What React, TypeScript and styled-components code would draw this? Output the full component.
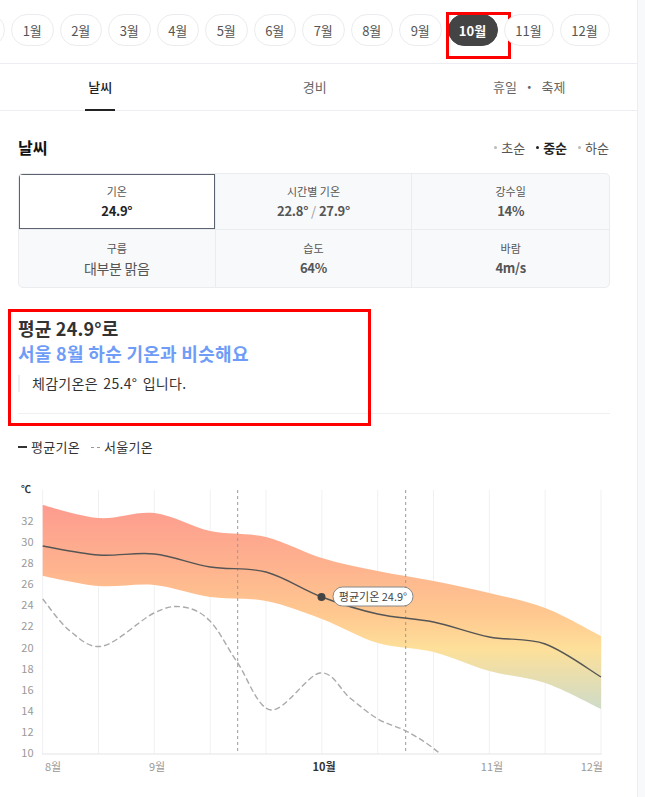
import * as React from 'react';
import styled, { createGlobalStyle } from 'styled-components';

const GlobalStyle = createGlobalStyle`
    html, body {
        margin: 0;
        padding: 0;
        background: #f8f9fa;
    }
    body {
        font-family: "Noto Sans CJK KR", "Noto Sans", sans-serif;
        color: #333;
    }
    * { box-sizing: border-box; }
`

const Page = styled.div`
    width: 638px;
    min-height: 797px;
    background: #fff;
    border-right: 1px solid #eceef1;
    overflow: hidden;
`

const MonthBar = styled.div`
    height: 64px;
    padding-top: 14px;
    border-bottom: 1px solid #eceef1;
    overflow: hidden;
`

const MonthTrack = styled.div`
    display: flex;
    gap: 6px;
    margin-left: -39px;
`

const Pill = styled.div<{ $active?: boolean, $wide?: boolean }>`
    position: relative;
    flex: 0 0 auto;
    min-width: ${p => p.$wide ? 50 : 42.5}px;
    height: 32px;
    padding: 0 10px;
    border-radius: 16px;
    border: 1px solid ${p => p.$active ? '#444' : '#eaecef'};
    background: ${p => p.$active ? '#444' : '#fff'};
    color: ${p => p.$active ? '#fff' : '#555'};
    font-weight: ${p => p.$active ? 700 : 400};
    font-size: 13px;
    display: flex;
    align-items: center;
    justify-content: center;
    white-space: nowrap;
`

const Mark = styled.span<{ $l: number, $t: number, $w: number, $h: number }>`
    position: absolute;
    left: ${p => p.$l}px;
    top: ${p => p.$t}px;
    width: ${p => p.$w}px;
    height: ${p => p.$h}px;
    border: 3px solid #ff0000;
    pointer-events: none;
`

const TabBar = styled.div`
    display: grid;
    grid-template-columns: repeat(3, 214.5px);
    margin-left: -7px;
    height: 47px;
    border-bottom: 1px solid #eceef1;
`

const Tab = styled.div<{ $active?: boolean }>`
    display: flex;
    justify-content: center;
    align-items: stretch;
    font-size: 13px;
    color: ${p => p.$active ? '#222' : '#666'};
    font-weight: ${p => p.$active ? 500 : 400};

    span {
        display: flex;
        align-items: center;
        padding: 0 3px;
        border-bottom: 2px solid ${p => p.$active ? '#222' : 'transparent'};
        margin-bottom: -1px;
    }
`

const Content = styled.div`
    padding: 0 27px 0 18px;
`

const SectionHead = styled.div`
    display: flex;
    justify-content: space-between;
    align-items: center;
    margin-top: 25px;
    height: 22px;
    margin-bottom: 15px;

    h2 {
        margin: 0;
        font-size: 16px;
        font-weight: 700;
        color: #111;
    }
`

const Periods = styled.div`
    display: flex;
    gap: 11px;
    margin-right: 1px;
`

const Period = styled.div<{ $active?: boolean }>`
    display: flex;
    align-items: center;
    gap: 4px;
    font-size: 13px;
    color: ${p => p.$active ? '#222' : '#555'};
    font-weight: ${p => p.$active ? 700 : 400};

    &::before {
        content: '';
        width: 3px;
        height: 3px;
        border-radius: 50%;
        background: ${p => p.$active ? '#222' : '#bbb'};
    }
`

const StatsGrid = styled.div`
    display: grid;
    grid-template-columns: repeat(3, 1fr);
    border: 1px solid #eaecef;
    border-radius: 5px;
    overflow: hidden;
    background: #f8f9fb;
`

const Cell = styled.div<{ $selected?: boolean }>`
    height: 56px;
    display: flex;
    flex-direction: column;
    align-items: center;
    justify-content: center;
    gap: 3px;
    border-right: 1px solid #eaecef;
    border-bottom: 1px solid #eaecef;
    background: ${p => p.$selected ? '#fff' : 'transparent'};
    box-shadow: ${p => p.$selected ? 'inset 0 0 0 1px #5b6270' : 'none'};

    &:nth-child(3n) { border-right: none; }
    &:nth-child(n+4) { border-bottom: none; height: 57px; }
`

const CellLabel = styled.div`
    font-size: 11px;
    color: #555;
    line-height: 16px;
`

const CellValue = styled.div<{ $plain?: boolean, $strong?: boolean }>`
    font-size: ${p => p.$plain ? 14 : 13}px;
    font-weight: ${p => p.$plain ? 400 : 700};
    color: ${p => p.$strong ? '#222' : '#555'};
    line-height: 18px;
    letter-spacing: -0.3px;

    .slash { color: #999; font-weight: 400; margin: 0 3px; }
`

const Summary = styled.div`
    position: relative;
    margin-top: 28px;
    padding-bottom: 21px;
    border-bottom: 1px solid #eef0f2;
`

const SummaryTitle = styled.div`
    font-size: 18px;
    font-weight: 700;
    line-height: 25px;
    color: #333;
    letter-spacing: 0.2px;
`

const SummaryLead = styled.div`
    font-size: 18px;
    font-weight: 700;
    line-height: 24px;
    color: #6f9cf6;
    letter-spacing: 0.3px;
`

const Quote = styled.div`
    margin-top: 10px;
    padding-left: 12px;
    border-left: 2px solid #eceef1;
    font-size: 14px;
    line-height: 17px;
    color: #333;
    letter-spacing: 0.3px;
    word-spacing: 2px;
`

const Legend = styled.div`
    display: flex;
    gap: 11px;
    margin-top: 24px;
    font-size: 13px;
    line-height: 18px;
    color: #333;
`

const LegendItem = styled.div<{ $dashed?: boolean }>`
    display: flex;
    align-items: center;
    gap: 4px;
    letter-spacing: 0.3px;

    &::before {
        content: '';
        width: 9px;
        height: 0;
        border-top: ${p => p.$dashed ? '1.5px dashed #999' : '2.5px solid #333'};
    }
`

const ChartBox = styled.div`
    margin-top: 21px;
    height: 300px;

    svg { display: block; overflow: visible; }
    text { font-family: "Noto Sans CJK KR", "Noto Sans", sans-serif; }
`

// --- chart data (page coordinates) ---
const X0 = 42.7
const STEP = 55.83
const xAt = (i: number) => X0 + i * STEP
const yAt = (t: number) => 752 - (t - 10) * 10.55

const upper = [504, 517, 512, 530, 536, 557, 570, 580, 592, 607, 635]
const lower = [575, 585, 584, 596, 600, 618, 642, 651, 670, 682, 708]
const mean = [545, 554, 553, 566, 571, 596, 613, 621, 636, 643, 676]
const seoul: [number, number][] = [
    [42.7, 598], [70, 630], [103, 645], [154, 612], [183, 606], [210, 620],
    [237.7, 662], [271, 709], [320, 672], [350, 697], [378, 718], [406, 730],
    [433, 747], [462, 772],
]

function curve(pts: [number, number][], move = true) {
    let d = move ? `M${pts[0][0]},${pts[0][1]}` : `L${pts[0][0]},${pts[0][1]}`
    for (let i = 0; i < pts.length - 1; i++) {
        const p0 = pts[i - 1] || pts[i]
        const p1 = pts[i]
        const p2 = pts[i + 1]
        const p3 = pts[i + 2] || p2
        const c1x = p1[0] + (p2[0] - p0[0]) / 6
        const c1y = p1[1] + (p2[1] - p0[1]) / 6
        const c2x = p2[0] - (p3[0] - p1[0]) / 6
        const c2y = p2[1] - (p3[1] - p1[1]) / 6
        d += ` C${c1x},${c1y} ${c2x},${c2y} ${p2[0]},${p2[1]}`
    }
    return d
}

const toPts = (ys: number[]) => ys.map((y, i) => [xAt(i), y] as [number, number])

function TempChart() {
    const upperPts = toPts(upper)
    const lowerPts = toPts(lower).reverse()
    const band = curve(upperPts) + ' ' + curve(lowerPts, false) + ' Z'
    const ticks = [32, 30, 28, 26, 24, 22, 20, 18, 16, 14, 12, 10]

    return (
        <svg width={600} height={300} viewBox="18 476 600 300">
            <defs>
                <linearGradient id="band" gradientUnits="userSpaceOnUse" x1="0" y1="500" x2="0" y2="712">
                    <stop offset="0" stopColor="#fd9a8f" />
                    <stop offset="0.3" stopColor="#feb28e" />
                    <stop offset="0.55" stopColor="#ffca90" />
                    <stop offset="0.7" stopColor="#fde09a" />
                    <stop offset="1" stopColor="#cbdbcb" />
                </linearGradient>
                <clipPath id="plot">
                    <rect x={42} y={488} width={560} height={265} />
                </clipPath>
            </defs>

            <text x={21} y={492} fontSize={10} fontWeight={700} fill="#333">℃</text>
            {ticks.map(t => (
                <text key={t} x={33.5} y={yAt(t) + 4} fontSize={11} fill="#999" textAnchor="end">{t}</text>
            ))}

            {Array.from({ length: 11 }).map((_, i) => (
                <line key={i} x1={xAt(i)} x2={xAt(i)} y1={489} y2={753} stroke="#f0f1f3" strokeWidth={1} />
            ))}

            <path d={band} fill="url(#band)" />

            <line x1={237.7} x2={237.7} y1={489} y2={753} stroke="#999" strokeWidth={1} strokeDasharray="3 3" />
            <line x1={405.7} x2={405.7} y1={489} y2={753} stroke="#999" strokeWidth={1} strokeDasharray="3 3" />

            <path d={curve(toPts(mean))} fill="none" stroke="#555" strokeWidth={1.4} />
            <path d={curve(seoul)} fill="none" stroke="#aaa" strokeWidth={1.4} strokeDasharray="6 3" clipPath="url(#plot)" />

            <line x1={42} x2={601.5} y1={753} y2={753} stroke="#e3e4e6" strokeWidth={1} />

            <circle cx={321.5} cy={596} r={4} fill="#444" />
            <rect x={333} y={586} width={80} height={19} rx={9.5} fill="#fff" stroke="#888" strokeWidth={1} />
            <text x={373} y={599.5} fontSize={11} fill="#444" textAnchor="middle">평균기온 24.9°</text>

            <text x={45} y={770} fontSize={11} fill="#999">8월</text>
            <text x={157} y={770} fontSize={11} fill="#999" textAnchor="middle">9월</text>
            <text x={324} y={770} fontSize={11} fill="#333" fontWeight={700} textAnchor="middle">10월</text>
            <text x={492} y={770} fontSize={11} fill="#999" textAnchor="middle">11월</text>
            <text x={603} y={770} fontSize={11} fill="#999" textAnchor="end">12월</text>
        </svg>
    )
}

const months = ['1월', '2월', '3월', '4월', '5월', '6월', '7월', '8월', '9월', '10월', '11월', '12월']

function App() {
    return (
        <Page>
            <GlobalStyle />
            <MonthBar>
                <MonthTrack>
                    <Pill style={{ width: 44 }} />
                    {months.map(m => (
                        <Pill key={m} $active={m === '10월'} $wide={m.length > 2}>
                            {m}
                            {m === '10월' && <Mark $l={-2.5} $t={-3} $w={65} $h={47} />}
                        </Pill>
                    ))}
                </MonthTrack>
            </MonthBar>

            <TabBar>
                <Tab $active><span>날씨</span></Tab>
                <Tab><span>경비</span></Tab>
                <Tab><span>휴일 &nbsp;・&nbsp; 축제</span></Tab>
            </TabBar>

            <Content>
                <SectionHead>
                    <h2>날씨</h2>
                    <Periods>
                        <Period>초순</Period>
                        <Period $active>중순</Period>
                        <Period>하순</Period>
                    </Periods>
                </SectionHead>

                <StatsGrid>
                    <Cell $selected>
                        <CellLabel>기온</CellLabel>
                        <CellValue $strong>24.9°</CellValue>
                    </Cell>
                    <Cell>
                        <CellLabel>시간별 기온</CellLabel>
                        <CellValue>22.8°<span className="slash">/</span>27.9°</CellValue>
                    </Cell>
                    <Cell>
                        <CellLabel>강수일</CellLabel>
                        <CellValue>14%</CellValue>
                    </Cell>
                    <Cell>
                        <CellLabel>구름</CellLabel>
                        <CellValue $plain>대부분 맑음</CellValue>
                    </Cell>
                    <Cell>
                        <CellLabel>습도</CellLabel>
                        <CellValue>64%</CellValue>
                    </Cell>
                    <Cell>
                        <CellLabel>바람</CellLabel>
                        <CellValue>4m/s</CellValue>
                    </Cell>
                </StatsGrid>

                <Summary>
                    <Mark $l={-10.5} $t={-7} $w={363} $h={117} />
                    <SummaryTitle>평균 24.9°로</SummaryTitle>
                    <SummaryLead>서울 8월 하순 기온과 비슷해요</SummaryLead>
                    <Quote>체감기온은 25.4° 입니다.</Quote>
                </Summary>

                <Legend>
                    <LegendItem>평균기온</LegendItem>
                    <LegendItem $dashed>서울기온</LegendItem>
                </Legend>

                <ChartBox>
                    <TempChart />
                </ChartBox>
            </Content>
        </Page>
    )
}

export default App
